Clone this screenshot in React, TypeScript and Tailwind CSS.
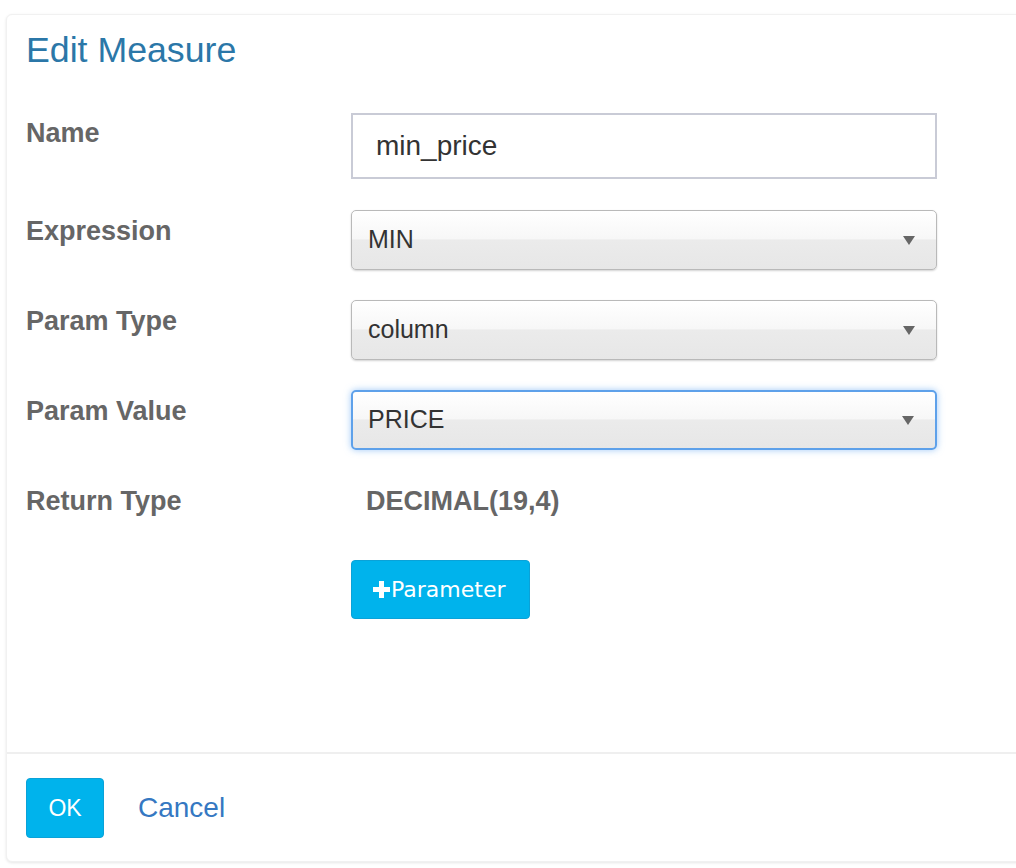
const selects = [
    { label: 'Expression', value: 'MIN', focused: false },
    { label: 'Param Type', value: 'column', focused: false },
    { label: 'Param Value', value: 'PRICE', focused: true },
];

function Caret() {
    return (
        <svg width="12" height="9" viewBox="0 0 12 9" className="shrink-0">
            <path d="M0 0 H12 L6 9 Z" fill="#666" />
        </svg>
    );
}

function SelectBox({ value, focused }: { value: string; focused: boolean }) {
    return (
        <div
            className={`h-[60px] w-[586px] rounded-[5px] flex items-center justify-between pr-[21px] bg-[linear-gradient(to_bottom,#ffffff_0%,#f7f7f7_48%,#ebebeb_50%,#e7e7e7_100%)] ${
                focused
                    ? 'border-2 border-[#5ea1ea] shadow-[0_0_7px_rgba(82,156,240,0.55)] pl-[15px]'
                    : 'border border-[#b9b9b9] shadow-[0_1px_2px_rgba(0,0,0,0.18)] pl-[16px]'
            }`}
        >
            <span className="text-[25px] text-[#333]">{value}</span>
            <Caret />
        </div>
    );
}

export default function App() {
    return (
        <div className="w-[1016px] h-[868px] overflow-hidden bg-white font-['Liberation_Sans',Arial,sans-serif]">
            <div className="ml-[6px] mt-[14px] w-[1040px] h-[848px] rounded-[6px] border border-[#f1f1f1] shadow-[0_1px_3px_rgba(0,0,0,0.1)] bg-white flex flex-col">
                <div className="h-[737px] px-[19px] pt-[16px]">
                    <h1 className="text-[35.7px] leading-[38px] text-[#2b77a8]">Edit Measure</h1>

                    <div className="mt-[44px] grid grid-cols-[325px_586px]">
                        <div className="pt-[4px] text-[27px] leading-[32px] font-bold text-[#666]">Name</div>
                        <input
                            defaultValue="min_price"
                            className="h-[66px] w-[586px] border-2 border-[#c9cbd6] px-[23px] text-[28px] text-[#333] outline-none"
                        />
                    </div>

                    {selects.map((s, i) => (
                        <div
                            key={s.label}
                            className={`${i === 0 ? 'mt-[31px]' : 'mt-[30px]'} grid grid-cols-[325px_586px]`}
                        >
                            <div className="pt-[5px] text-[27px] leading-[32px] font-bold text-[#666]">{s.label}</div>
                            <SelectBox value={s.value} focused={s.focused} />
                        </div>
                    ))}

                    <div className="mt-[30px] grid grid-cols-[325px_586px]">
                        <div className="pt-[5px] text-[27px] leading-[32px] font-bold text-[#666]">Return Type</div>
                        <div className="pt-[5px] pl-[15px] text-[27px] leading-[32px] font-bold text-[#666]">DECIMAL(19,4)</div>
                    </div>

                    <div className="mt-[43px] grid grid-cols-[325px_586px]">
                        <div />
                        <div>
                            <button className="h-[59px] w-[179px] rounded-[4px] border border-[#0aa2d8] bg-[#00b3ec] flex items-center pl-[21px] text-white font-['DejaVu_Sans',sans-serif] text-[22px]">
                                <svg width="17" height="17" viewBox="0 0 17 17" className="mr-[1px]">
                                    <path d="M6 0 H11 V6 H17 V11 H11 V17 H6 V11 H0 V6 H6 Z" fill="#fff" />
                                </svg>
                                Parameter
                            </button>
                        </div>
                    </div>
                </div>

                <div className="border-t-2 border-[#efefef] px-[19px] pt-[24px] flex items-center">
                    <button className="h-[60px] w-[78px] rounded-[4px] border border-[#0aa2d8] bg-[#00b3ec] text-white text-[23px]">
                        OK
                    </button>
                    <a className="ml-[34px] text-[28px] text-[#3578c2]">Cancel</a>
                </div>
            </div>
        </div>
    );
}
